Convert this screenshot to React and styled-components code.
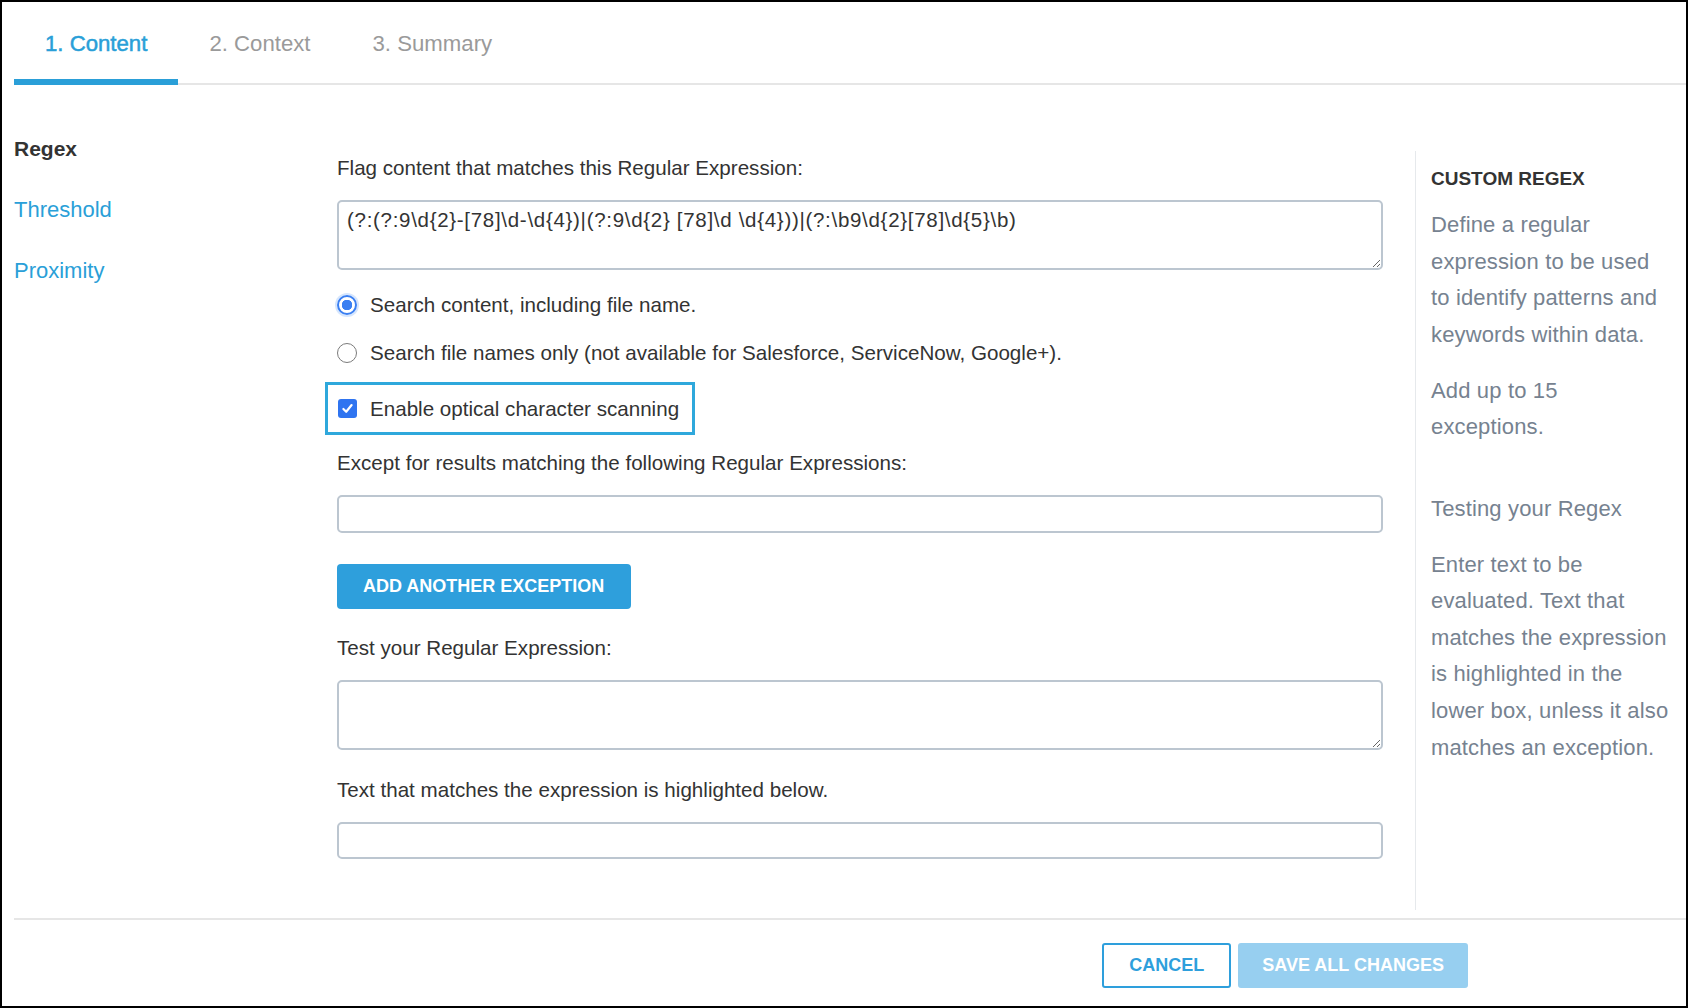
import React from 'react';
import styled, { createGlobalStyle } from 'styled-components';

const GlobalStyle = createGlobalStyle`
  html, body {
    margin: 0;
    padding: 0;
    background: #fff;
  }
  body {
    font-family: "Liberation Sans", Arial, sans-serif;
    color: #333;
  }
  * { box-sizing: border-box; }
`;

const Frame = styled.div`
  width: 1688px;
  height: 1008px;
  border: 2px solid #000;
  display: flex;
  flex-direction: column;
  background: #fff;
`;

const TabBar = styled.div`
  display: flex;
  margin-left: 12px;
  box-shadow: inset 0 -2px 0 #e6e6e6;
`;

const Tab = styled.div`
  padding: 29px 31px 22px;
  font-size: 22.2px;
  line-height: 26px;
  color: ${(p) => (p.active ? '#2a9fd8' : '#9a9a9a')};
  border-bottom: 6px solid ${(p) => (p.active ? '#2a9fd8' : 'transparent')};
  -webkit-text-stroke: ${(p) => (p.active ? '0.5px #2a9fd8' : '0')};
  cursor: pointer;
`;

const Content = styled.div`
  flex: 1;
  display: flex;
  padding-left: 12px;
`;

const Nav = styled.div`
  width: 323px;
  padding-top: 51px;
  display: flex;
  flex-direction: column;
`;

const NavItem = styled.div`
  font-size: ${(p) => (p.active ? '21px' : '22px')};
  line-height: 26px;
  margin-bottom: 35px;
  font-weight: ${(p) => (p.active ? 700 : 400)};
  color: ${(p) => (p.active ? '#333' : '#2a9fd8')};
  cursor: pointer;
`;

const Main = styled.div`
  width: 1046px;
  padding-top: 71px;
  display: flex;
  flex-direction: column;
  align-items: flex-start;
`;

const Label = styled.div`
  font-size: 20.6px;
  line-height: 24px;
  color: #333;
  margin-top: ${(p) => p.mt || 0}px;
`;

const TextArea = styled.textarea`
  width: 100%;
  height: 70px;
  margin-top: 20px;
  border: 2px solid #bcc6d0;
  border-radius: 5px;
  padding: 6px 8px;
  font-family: "Liberation Sans", Arial, sans-serif;
  font-size: 20.5px;
  letter-spacing: 0.7px;
  line-height: 24px;
  color: #333;
  resize: vertical;
  outline: none;
  background: #fff;
`;

const TextInput = styled.input`
  width: 100%;
  height: ${(p) => p.h || 38}px;
  margin-top: 20px;
  border: 2px solid #bcc6d0;
  border-radius: 5px;
  padding: 0 8px;
  font-family: "Liberation Sans", Arial, sans-serif;
  font-size: 20px;
  outline: none;
  background: #fff;
`;

const OptionRow = styled.label`
  display: flex;
  align-items: center;
  gap: 13px;
  height: 24px;
  font-size: 20.6px;
  color: #333;
  margin-top: ${(p) => p.mt || 0}px;
  cursor: pointer;
`;

const Radio = styled.span`
  width: 20px;
  height: 20px;
  border-radius: 50%;
  flex-shrink: 0;
  border: ${(p) => (p.checked ? '2px solid #3a7ff2' : '1.5px solid #7b7b7b')};
  background: ${(p) =>
    p.checked ? 'radial-gradient(circle, #3a7ff2 0 5px, #fff 5.5px)' : '#fff'};
  box-shadow: ${(p) => (p.checked ? '0 0 0 2px #d6e6fd' : 'none')};
`;

const Highlight = styled.div`
  margin-top: 17px;
  margin-left: -12px;
  border: 3px solid #2fa8dc;
  height: 53px;
  padding: 0 13px 0 10px;
  display: flex;
  align-items: center;
`;

const CheckBox = styled.span`
  width: 19px;
  height: 19px;
  border-radius: 3px;
  background: #2f74f0;
  display: flex;
  align-items: center;
  justify-content: center;
  flex-shrink: 0;
`;

const PrimaryButton = styled.button`
  margin-top: 31px;
  height: 45px;
  padding: 0 27px 0 26px;
  border: none;
  border-radius: 4px;
  background: #2e9fdc;
  color: #fff;
  font-family: "Liberation Sans", Arial, sans-serif;
  font-weight: 700;
  font-size: 18px;
  cursor: pointer;
`;

const Sidebar = styled.div`
  flex: 1;
  margin-left: 32px;
  margin-top: 66px;
  margin-bottom: 8px;
  border-left: 1px solid #e6e9ec;
  padding: 16px 0 0 15px;
`;

const SideTitle = styled.div`
  font-size: 19px;
  line-height: 24px;
  font-weight: 700;
  color: #333;
`;

const SideText = styled.p`
  margin: ${(p) => p.mt || 19.5}px 0 0;
  font-size: 22px;
  letter-spacing: 0.15px;
  line-height: 36.6px;
  color: #768290;
  white-space: nowrap;
`;

const Footer = styled.div`
  margin-left: 12px;
  border-top: 2px solid #e6e6e6;
  display: flex;
  justify-content: flex-end;
  gap: 7px;
  padding: 23px 218px 18px 0;
`;

const FooterButton = styled.button`
  height: 45px;
  padding: 0 ${(p) => (p.outline ? 25 : 22)}px;
  border-radius: 3px;
  font-family: "Liberation Sans", Arial, sans-serif;
  font-weight: 700;
  font-size: 18px;
  border: 2px solid ${(p) => (p.outline ? '#2e9fdc' : '#97cff0')};
  background: ${(p) => (p.outline ? '#fff' : '#97cff0')};
  color: ${(p) => (p.outline ? '#2e9fdc' : '#fff')};
  cursor: ${(p) => (p.disabled ? 'not-allowed' : 'pointer')};
`;

const regex = '(?:(?:9\\d{2}-[78]\\d-\\d{4})|(?:9\\d{2} [78]\\d \\d{4}))|(?:\\b9\\d{2}[78]\\d{5}\\b)';

export default function App() {
  return (
    <>
      <GlobalStyle />
      <Frame>
        <TabBar>
          <Tab active>1. Content</Tab>
          <Tab>2. Context</Tab>
          <Tab>3. Summary</Tab>
        </TabBar>

        <Content>
          <Nav>
            <NavItem active>Regex</NavItem>
            <NavItem>Threshold</NavItem>
            <NavItem>Proximity</NavItem>
          </Nav>

          <Main>
            <Label>Flag content that matches this Regular Expression:</Label>
            <TextArea readOnly defaultValue={regex} />

            <OptionRow mt={23}>
              <Radio checked />
              Search content, including file name.
            </OptionRow>
            <OptionRow mt={24}>
              <Radio />
              Search file names only (not available for Salesforce, ServiceNow, Google+).
            </OptionRow>

            <Highlight>
              <OptionRow>
                <CheckBox>
                  <svg width="13" height="13" viewBox="0 0 12 12">
                    <path d="M2.2 6.4 L4.8 9 L9.8 2.8" fill="none" stroke="#fff" strokeWidth="2" strokeLinecap="round" strokeLinejoin="round" />
                  </svg>
                </CheckBox>
                Enable optical character scanning
              </OptionRow>
            </Highlight>

            <Label mt={16}>Except for results matching the following Regular Expressions:</Label>
            <TextInput readOnly />

            <PrimaryButton>ADD ANOTHER EXCEPTION</PrimaryButton>

            <Label mt={27}>Test your Regular Expression:</Label>
            <TextArea readOnly />

            <Label mt={28}>Text that matches the expression is highlighted below.</Label>
            <TextInput readOnly h={37} />
          </Main>

          <Sidebar>
            <SideTitle>CUSTOM REGEX</SideTitle>
            <SideText mt={16}>
              Define a regular<br />
              expression to be used<br />
              to identify patterns and<br />
              keywords within data.
            </SideText>
            <SideText>
              Add up to 15<br />
              exceptions.
            </SideText>
            <SideText mt={44.5}>Testing your Regex</SideText>
            <SideText>
              Enter text to be<br />
              evaluated. Text that<br />
              matches the expression<br />
              is highlighted in the<br />
              lower box, unless it also<br />
              matches an exception.
            </SideText>
          </Sidebar>
        </Content>

        <Footer>
          <FooterButton outline>CANCEL</FooterButton>
          <FooterButton disabled>SAVE ALL CHANGES</FooterButton>
        </Footer>
      </Frame>
    </>
  );
}
